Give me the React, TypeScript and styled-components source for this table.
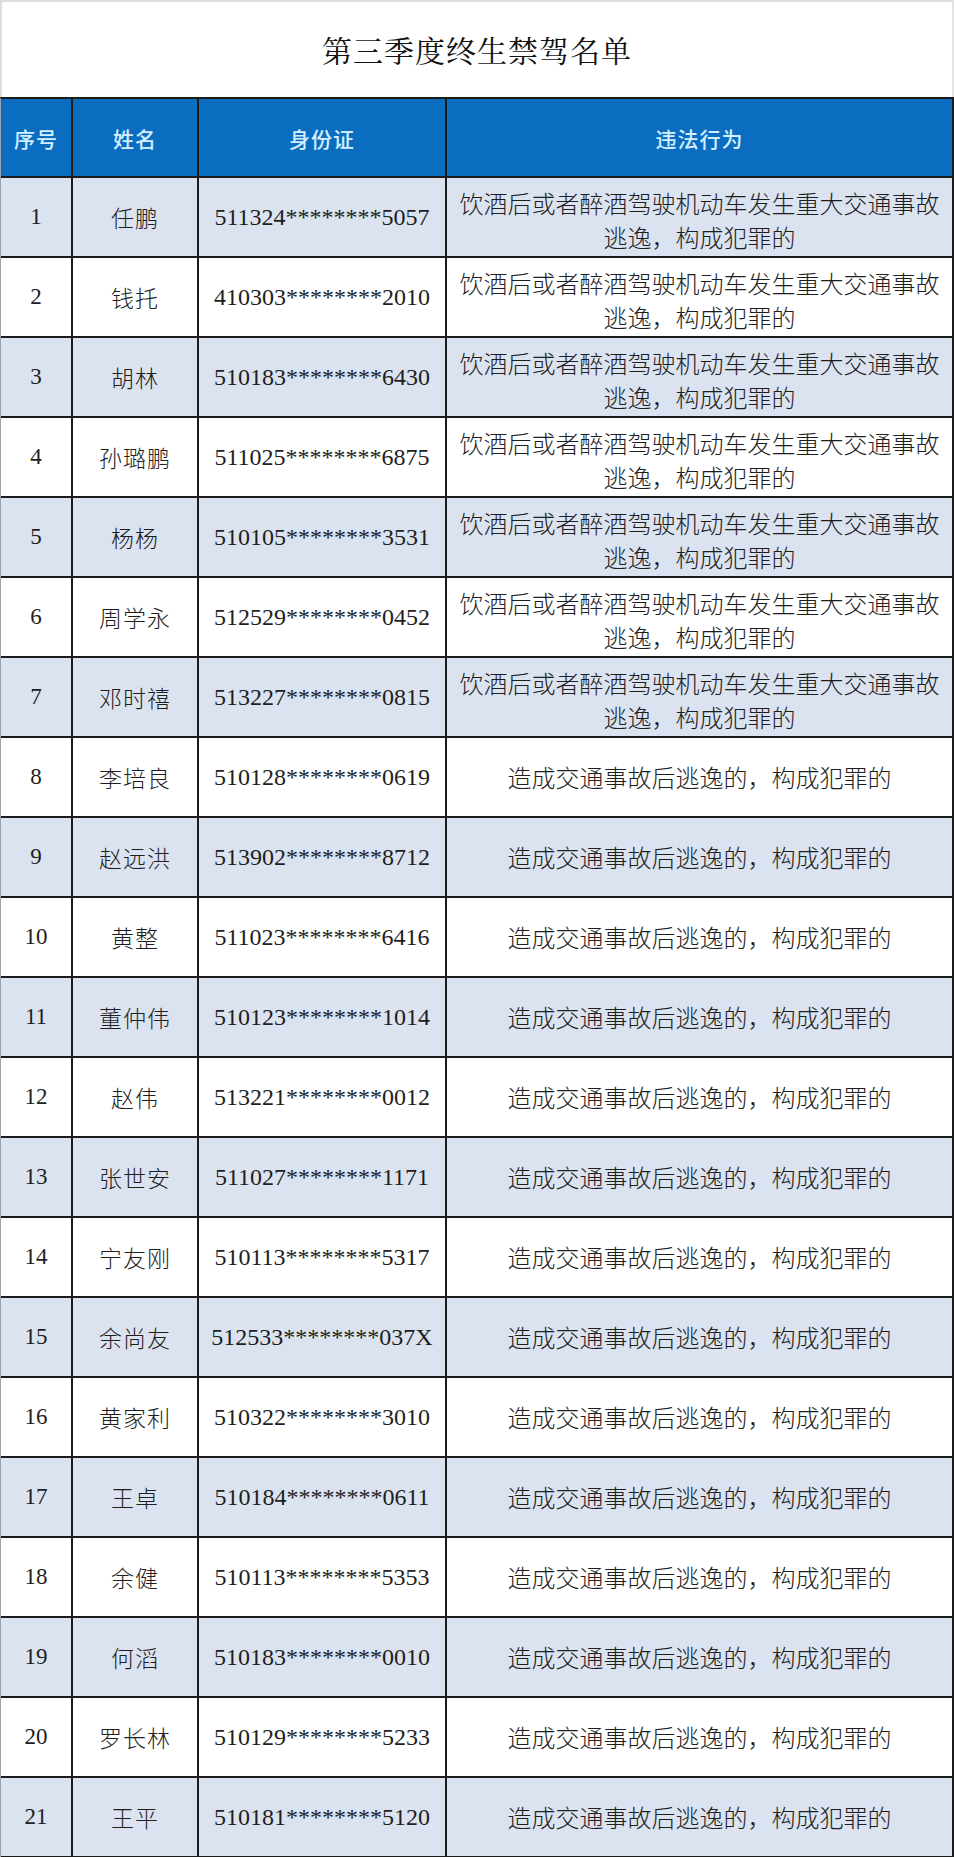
import styled, { createGlobalStyle } from "styled-components";

const GlobalStyle = createGlobalStyle`
    html, body {
        margin: 0;
        padding: 0;
        background: #ffffff;
    }
    * {
        box-sizing: border-box;
    }
`;

const cjk = `"Noto Serif CJK SC", "Noto Sans CJK SC", sans-serif`;
const serif = `"Liberation Serif", "Noto Sans CJK SC", serif`;

const Page = styled.div`
    width: 954px;
    background: #ffffff;
`;

const Title = styled.h1`
    margin: 0;
    height: 97px;
    display: flex;
    align-items: center;
    justify-content: center;
    padding-bottom: 2px;
    border-top: 2px solid #dcdcdc;
    border-left: 2px solid #dcdcdc;
    border-right: 2px solid #e4e4e4;
    font-family: ${cjk};
    font-size: 30px;
    font-weight: 400;
    color: #111111;
    letter-spacing: 1px;
`;

const Table = styled.div`
    display: flex;
    flex-direction: column;
    border-left: 1px solid #9aa3ad;
    border-right: 2px solid #1b1b1b;
    border-top: 2px solid #1b1b1b;
`;

const Row = styled.div<{ $bg: string; $h: number }>`
    display: grid;
    grid-template-columns: 72px 126px 248px 1fr;
    height: ${(p) => p.$h}px;
    background: ${(p) => p.$bg};
    border-bottom: 2px solid #1b1b1b;
`;

const Cell = styled.div<{ $last?: boolean }>`
    display: flex;
    align-items: center;
    justify-content: center;
    text-align: center;
    border-right: ${(p) => (p.$last ? "none" : "2px solid #1b1b1b")};
    overflow: hidden;
`;

const HeadText = styled.span`
    font-family: "Noto Sans CJK SC", sans-serif;
    font-size: 21px;
    font-weight: 500;
    color: #d2efff;
    letter-spacing: 1px;
`;

const Num = styled.span<{ $size: number }>`
    font-family: ${serif};
    font-size: ${(p) => p.$size}px;
    color: #1e1e1e;
`;

const Name = styled.span`
    font-family: "Noto Sans CJK SC", sans-serif;
    font-size: 23px;
    font-weight: 300;
    color: #1e1e1e;
    letter-spacing: 1px;
`;

const Offence = styled.span<{ $twoLine?: boolean }>`
    font-family: "Noto Sans CJK SC", sans-serif;
    font-size: 24px;
    font-weight: 300;
    line-height: 34px;
    color: #1e1e1e;
    white-space: nowrap;
    padding-top: ${(p) => (p.$twoLine ? "6px" : "0")};
`;

type Person = { name: string; id: string; kind: 1 | 2 };

const people: Person[] = [
    { name: "任鹏", id: "511324********5057", kind: 1 },
    { name: "钱托", id: "410303********2010", kind: 1 },
    { name: "胡林", id: "510183********6430", kind: 1 },
    { name: "孙璐鹏", id: "511025********6875", kind: 1 },
    { name: "杨杨", id: "510105********3531", kind: 1 },
    { name: "周学永", id: "512529********0452", kind: 1 },
    { name: "邓时禧", id: "513227********0815", kind: 1 },
    { name: "李培良", id: "510128********0619", kind: 2 },
    { name: "赵远洪", id: "513902********8712", kind: 2 },
    { name: "黄整", id: "511023********6416", kind: 2 },
    { name: "董仲伟", id: "510123********1014", kind: 2 },
    { name: "赵伟", id: "513221********0012", kind: 2 },
    { name: "张世安", id: "511027********1171", kind: 2 },
    { name: "宁友刚", id: "510113********5317", kind: 2 },
    { name: "余尚友", id: "512533********037X", kind: 2 },
    { name: "黄家利", id: "510322********3010", kind: 2 },
    { name: "王卓", id: "510184********0611", kind: 2 },
    { name: "余健", id: "510113********5353", kind: 2 },
    { name: "何滔", id: "510183********0010", kind: 2 },
    { name: "罗长林", id: "510129********5233", kind: 2 },
    { name: "王平", id: "510181********5120", kind: 2 },
];

function OffenceText({ kind }: { kind: 1 | 2 }) {
    if (kind === 1) {
        return (
            <Offence $twoLine>
                饮酒后或者醉酒驾驶机动车发生重大交通事故
                <br />
                逃逸，构成犯罪的
            </Offence>
        );
    }
    return <Offence>造成交通事故后逃逸的，构成犯罪的</Offence>;
}

export default function App() {
    return (
        <Page>
            <GlobalStyle />
            <Title>第三季度终生禁驾名单</Title>
            <Table>
                <Row $bg="#0b6dbf" $h={79}>
                    <Cell><HeadText>序号</HeadText></Cell>
                    <Cell><HeadText>姓名</HeadText></Cell>
                    <Cell><HeadText>身份证</HeadText></Cell>
                    <Cell $last><HeadText>违法行为</HeadText></Cell>
                </Row>
                {people.map((p, i) => (
                    <Row key={p.id} $bg={i % 2 === 0 ? "#dbe3f0" : "#ffffff"} $h={80}>
                        <Cell><Num $size={23}>{i + 1}</Num></Cell>
                        <Cell><Name>{p.name}</Name></Cell>
                        <Cell><Num $size={24}>{p.id}</Num></Cell>
                        <Cell $last><OffenceText kind={p.kind} /></Cell>
                    </Row>
                ))}
            </Table>
        </Page>
    );
}
